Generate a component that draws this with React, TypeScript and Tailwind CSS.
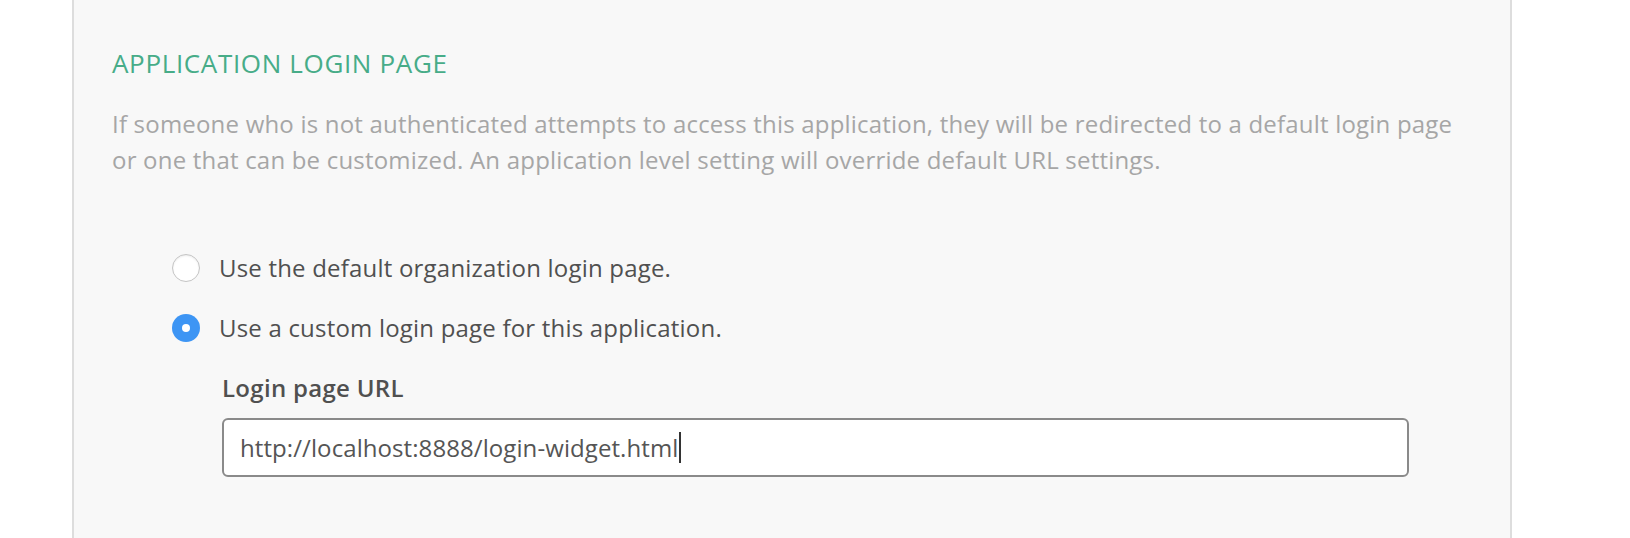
import React from "react";

function Radio({ checked }: { checked: boolean }) {
  if (checked) {
    return (
      <span className="flex h-[28px] w-[28px] shrink-0 items-center justify-center rounded-full bg-[#3d95f4]">
        <span className="h-[8px] w-[8px] rounded-full bg-white" />
      </span>
    );
  }
  return (
    <span className="block h-[28px] w-[28px] shrink-0 rounded-full border border-[#c4c4c4] bg-white shadow-[inset_0_1px_2px_rgba(0,0,0,0.08)]" />
  );
}

export default function App() {
  return (
    <div className="h-[538px] w-[1630px] overflow-hidden bg-white" style={{ fontFamily: "'Open Sans', Lato, sans-serif" }}>
      <div className="ml-[72px] h-full w-[1440px] border-x-2 border-[#dddddd] bg-[#f8f8f8] pl-[38px] pr-[40px] pt-[48px]">
        <h2 className="text-[26px] leading-[30px] font-normal tracking-[0.65px] text-[#47ac88]">
          APPLICATION LOGIN PAGE
        </h2>
        <p className="mt-[28px] whitespace-nowrap text-[24px] leading-[36px] tracking-[0.2px] text-[#a6a6a6]">
          If someone who is not authenticated attempts to access this application, they will be redirected to a default login page
          <br />
          or one that can be customized. An application level setting will override default URL settings.
        </p>
        <div className="mt-[60px] pl-[60px]">
          <label className="flex h-[60px] items-center gap-[19px]">
            <Radio checked={false} />
            <span className="text-[24px] tracking-[0.2px] text-[#505050]">Use the default organization login page.</span>
          </label>
          <label className="flex h-[60px] items-center gap-[19px]">
            <Radio checked={true} />
            <span className="text-[24px] tracking-[0.2px] text-[#505050]">Use a custom login page for this application.</span>
          </label>
          <div className="pl-[50px]">
            <div className="mt-[15px] text-[24px] leading-[30px] font-semibold tracking-[0.3px] text-[#505050]">Login page URL</div>
            <div className="mt-[15px] flex h-[59px] w-[1187px] items-center rounded-[6px] border-2 border-[#8a8a8a] bg-white pl-[16px]">
              <span className="text-[24px] tracking-[0.08px] text-[#555555]">http://localhost:8888/login-widget.html</span>
              <span className="ml-[1px] h-[31px] w-[2px] bg-[#333333]" />
            </div>
          </div>
        </div>
      </div>
    </div>
  );
}
